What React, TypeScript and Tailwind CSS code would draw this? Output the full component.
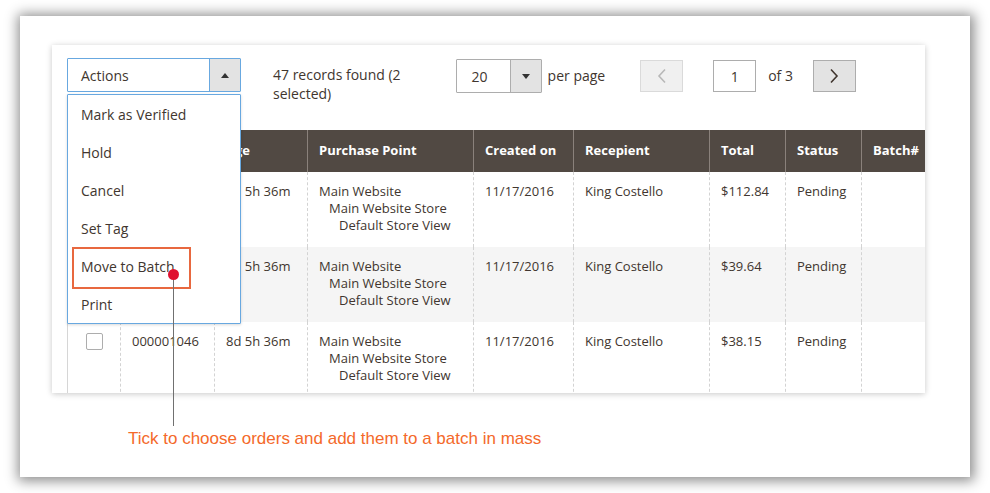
import React from "react";

const cols = [
  { w: 53, label: "" },
  { w: 94, label: "ID" },
  { w: 93, label: "Age" },
  { w: 166, label: "Purchase Point" },
  { w: 100, label: "Created on" },
  { w: 136, label: "Recepient" },
  { w: 76, label: "Total" },
  { w: 76, label: "Status" },
  { w: 80, label: "Batch#" },
];

const rows = [
  { id: "000001048", age: "8d 5h 36m", date: "11/17/2016", name: "King Costello", total: "$112.84", status: "Pending" },
  { id: "000001047", age: "8d 5h 36m", date: "11/17/2016", name: "King Costello", total: "$39.64", status: "Pending" },
  { id: "000001046", age: "8d 5h 36m", date: "11/17/2016", name: "King Costello", total: "$38.15", status: "Pending" },
];

function Chevron({ dir, color }: { dir: "left" | "right"; color: string }) {
  return (
    <svg width="10" height="16" viewBox="0 0 10 16">
      {dir === "left" ? (
        <path d="M8 1.5 L2 8 L8 14.5" fill="none" stroke={color} strokeWidth="1.6" />
      ) : (
        <path d="M2 1.5 L8 8 L2 14.5" fill="none" stroke={color} strokeWidth="1.6" />
      )}
    </svg>
  );
}

export default function App() {
  const menu = ["Mark as Verified", "Hold", "Cancel", "Set Tag", "Move to Batch", "Print"];
  return (
    <div
      className="relative w-[990px] h-[493px] bg-white overflow-hidden"
      style={{ fontFamily: '"Open Sans", "Noto Sans", sans-serif' }}
    >
      <div className="absolute left-[20px] top-[16px] w-[950px] h-[461px] bg-white shadow-[1px_1px_12px_3px_rgba(0,0,0,0.45)]" />
      <div className="relative pt-[45px] pl-[52px]">
        {/* card */}
        <div className="relative w-[873px] h-[348px] bg-white shadow-[0_1px_6px_rgba(0,0,0,0.22)]">
          <div className="absolute inset-0 overflow-hidden">
            {/* toolbar */}
            <div className="flex items-start pl-[15px] pt-[13px] h-[85px] text-[14px] text-[#41362f]">
              <div className="flex w-[174px] h-[34px] border border-[#68a8e0] rounded-[1px]">
                <div className="flex-1 flex items-center pl-[13px] text-[#41362f]">Actions</div>
                <div className="w-[31px] bg-[#e3e3e3] border-l border-[#68a8e0] flex items-center justify-center">
                  <svg width="8" height="5" viewBox="0 0 8 5">
                    <path d="M0 5 L4 0 L8 5 Z" fill="#333" />
                  </svg>
                </div>
              </div>
              <div className="ml-[32px] mt-[7px] leading-[19px] text-[#41362f]">
                47 records found (2
                <br />
                selected)
              </div>
              <div className="ml-[55px] mt-[1px] flex w-[86px] h-[34px] border border-[#adadad] rounded-[1px]">
                <div className="flex-1 flex items-center pl-[15px]">20</div>
                <div className="w-[31px] bg-[#e3e3e3] border-l border-[#adadad] flex items-center justify-center">
                  <svg width="8" height="5" viewBox="0 0 8 5">
                    <path d="M0 0 L4 5 L8 0 Z" fill="#333" />
                  </svg>
                </div>
              </div>
              <div className="ml-[6px] mt-[7px]">per page</div>
              <div className="ml-[35px] mt-[2px] w-[43px] h-[32px] bg-[#f0f0f0] border border-[#dadada] flex items-center justify-center">
                <Chevron dir="left" color="#b8b8b8" />
              </div>
              <div className="ml-[30px] mt-[2px] w-[43px] h-[32px] border border-[#adadad] flex items-center justify-center">
                1
              </div>
              <div className="ml-[12px] mt-[7px]">of 3</div>
              <div className="ml-[20px] mt-[2px] w-[43px] h-[32px] bg-[#e3e3e3] border border-[#adadad] flex items-center justify-center">
                <Chevron dir="right" color="#41362f" />
              </div>
            </div>
            {/* table */}
            <div className="ml-[15px] text-[13px] text-[#41362f]">
              <div className="flex h-[42px] bg-[#514943] text-white font-bold">
                {cols.map((c, i) => (
                  <div
                    key={i}
                    className={`shrink-0 flex items-center pl-[11px] ${i > 0 ? "border-l border-[#8a817b]" : ""}`}
                    style={{ width: c.w }}
                  >
                    {c.label}
                  </div>
                ))}
              </div>
              {rows.map((r, ri) => {
                const cells: React.ReactNode[] = [
                  <div className="flex justify-center">
                    <div className="w-[17px] h-[17px] border border-[#adadad] rounded-[2px] bg-white" />
                  </div>,
                  r.id,
                  r.age,
                  <div className="leading-[17px]">
                    <div>Main Website</div>
                    <div className="pl-[10px]">Main Website Store</div>
                    <div className="pl-[20px]">Default Store View</div>
                  </div>,
                  r.date,
                  r.name,
                  r.total,
                  r.status,
                  "",
                ];
                return (
                  <div
                    key={ri}
                    className={`flex h-[75px] border-l border-[#d6d6d6] ${ri === 1 ? "bg-[#f5f5f5]" : "bg-white"}`}
                  >
                    {cells.map((c, ci) => (
                      <div
                        key={ci}
                        className={`shrink-0 pt-[11px] leading-[17px] ${ci === 0 ? "pl-0" : "pl-[11px] border-l border-dashed border-[#d3d3d3]"}`}
                        style={{ width: ci === 0 ? cols[ci].w - 1 : cols[ci].w }}
                      >
                        {c}
                      </div>
                    ))}
                  </div>
                );
              })}
            </div>
          </div>
          {/* dropdown menu */}
          <div className="absolute left-[15px] top-[49px] w-[174px] h-[230px] bg-white border border-[#68a8e0] rounded-[1px] text-[14px] text-[#41362f] shadow-[0_1px_3px_rgba(0,0,0,0.15)]">
            {menu.map((m) => (
              <div key={m} className="h-[38px] flex items-center pl-[13px]">
                {m}
              </div>
            ))}
            <div className="absolute left-[4px] top-[152px] w-[119px] h-[42px] border-2 border-[#e8683f]" />
          </div>
          {/* annotation dot and line */}
          <div className="absolute left-[120.5px] top-[229px] w-px h-[152px] bg-[#707070]" />
          <div className="absolute left-[116px] top-[224px] w-[11px] h-[11px] rounded-full bg-[#e0102f]" />
        </div>
        <div
          className="pl-[76px] mt-[35px] text-[17px] text-[#f4692a] leading-[21px]"
          style={{ fontFamily: '"Liberation Sans", Arial, sans-serif' }}
        >
          Tick to choose orders and add them to a batch in mass
        </div>
      </div>
    </div>
  );
}
